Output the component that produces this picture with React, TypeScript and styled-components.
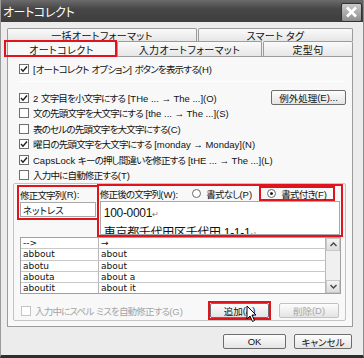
import React from "react"
import styled, { createGlobalStyle, css } from "styled-components"

const GlobalStyle = createGlobalStyle`
  html, body {
    margin: 0;
    padding: 0;
    background: #e9e9e9;
  }
  * { box-sizing: border-box; }
`

const font = `"Noto Sans CJK JP", "Noto Sans", sans-serif`
const red = "#e0141c"

const Window = styled.div`
  position: relative;
  width: 364px;
  height: 358px;
  display: flex;
  flex-direction: column;
  background: #ececec;
  border-left: 1px solid #9a9a9a;
  border-right: 1px solid #8c8c8c;
  border-bottom: 3px solid #2e2e2e;
  font-family: ${font};
  font-size: 9.5px;
  font-feature-settings: "palt" 1;
  letter-spacing: -0.8px;
  color: #111;
  overflow: hidden;
`

const Latin = styled.span`
  font-family: "Liberation Sans", ${font};
  letter-spacing: 0;
  font-size: 9.5px;
`

const TitleBar = styled.div`
  height: 22px;
  flex: none;
  display: flex;
  align-items: center;
  justify-content: space-between;
  padding: 0 1px 0 2px;
  background: linear-gradient(#6b6b6b, #474747 40%, #3e3e3e);
  color: #fff;
  font-size: 12px;
  letter-spacing: -0.4px;
`

const CloseBox = styled.div`
  width: 21px;
  height: 19px;
  margin-top: 2px;
  display: flex;
  align-items: center;
  justify-content: center;
  border: 1px solid #333;
  border-radius: 2px;
  background: linear-gradient(#c9c9c9, #8e8e8e);
`

const Body = styled.div`
  flex: 1;
  display: flex;
  flex-direction: column;
  padding: 6px 10px 0 6px;
`

const TabRow = styled.div<{ $front?: boolean }>`
  display: flex;
  height: ${p => (p.$front ? 15 : 13)}px;
  gap: 1px;
`

const Tab = styled.div<{ $w: number; $active?: boolean }>`
  position: relative;
  width: ${p => p.$w}px;
  display: flex;
  align-items: center;
  justify-content: center;
  font-size: 10px;
  letter-spacing: 0.4px;
  background: ${p => (p.$active ? "#f8f8f8" : "linear-gradient(#fafafa, #e6e6e6)")};
  border: 1px solid #9c9c9c;
  border-bottom: none;
  border-radius: 2px 2px 0 0;
  ${p =>
    p.$active &&
    css`
      &::after {
        content: "";
        position: absolute;
        left: -4px;
        right: -2px;
        top: -2px;
        bottom: -1px;
        border: 2px solid ${red};
      }
    `}
`

const Panel = styled.div`
  height: 271px;
  width: 346px;
  display: flex;
  flex-direction: column;
  background: #f8f8f8;
  border: 1px solid #9c9c9c;
  padding: 6px 6px 0 11px;
`

const CheckRow = styled.label<{ $h?: number; $disabled?: boolean }>`
  height: ${p => p.$h ?? 15.5}px;
  display: flex;
  align-items: center;
  gap: 4px;
  white-space: nowrap;
  color: ${p => (p.$disabled ? "#a4a4a4" : "#111")};
`

const Box = styled.span<{ $disabled?: boolean }>`
  width: 10px;
  height: 10px;
  flex: none;
  display: flex;
  align-items: center;
  justify-content: center;
  background: #fff;
  border: 1px solid ${p => (p.$disabled ? "#c4c4c4" : "#6f6f6f")};
`

const Separator = styled.div`
  height: 1px;
  margin: 6px 1px 8px 0;
  background: #bdbdbd;
  border-bottom: 1px solid #fff;
`

const SpreadRow = styled.div`
  display: flex;
  align-items: center;
  justify-content: space-between;
`

const Button = styled.div<{ $w: number; $disabled?: boolean; $marked?: boolean }>`
  position: relative;
  width: ${p => p.$w}px;
  height: 15px;
  display: flex;
  align-items: center;
  justify-content: center;
  border: 1px solid ${p => (p.$disabled ? "#c2c2c2" : "#6d6d6d")};
  border-radius: 2px;
  background: linear-gradient(#fdfdfd, #e4e4e4);
  color: ${p => (p.$disabled ? "#a8a8a8" : "#111")};
  letter-spacing: 0;
  ${p =>
    p.$marked &&
    css`
      &::after {
        content: "";
        position: absolute;
        inset: -3px -3px -3px -3px;
        border: 2px solid ${red};
      }
    `}
`

const Group = styled.div`
  position: relative;
  margin: 0 0 0 -6px;
  width: 333px;
  height: 138px;
  border: 1px solid #c4c4c4;
  border-radius: 2px;
  padding: 0 2px 0 3px;
  display: flex;
  flex-direction: column;
`

const EntryArea = styled.div`
  display: flex;
  height: 53px;
  align-items: flex-start;
`

const Marked = styled.div<{ $w: number; $h: number; $top?: number; $left?: number }>`
  width: ${p => p.$w}px;
  height: ${p => p.$h}px;
  margin-top: ${p => p.$top ?? 0}px;
  margin-left: ${p => p.$left ?? 0}px;
  border: 2px solid ${red};
  display: flex;
  flex-direction: column;
  padding: 0 1px;
`

const FieldLabel = styled.div`
  height: 15px;
  display: flex;
  align-items: center;
  white-space: nowrap;
`

const RadioOpt = styled.span<{ $marked?: boolean }>`
  height: 15px;
  display: flex;
  align-items: center;
  gap: 5px;
  ${p =>
    p.$marked
      ? css`
          border: 2px solid ${red};
          padding: 0 6px;
          margin: 0 5px 0 auto;
        `
      : css`
          margin-left: 14px;
        `}
`

const Radio = styled.span<{ $on?: boolean }>`
  width: 9px;
  height: 9px;
  border-radius: 50%;
  border: 1px solid #6a6a6a;
  background: #fff;
  display: flex;
  align-items: center;
  justify-content: center;
  &::after {
    content: "";
    width: 3px;
    height: 3px;
    border-radius: 50%;
    background: ${p => (p.$on ? "#222" : "transparent")};
  }
`

const Input = styled.div`
  height: 15px;
  background: #fff;
  border: 1px solid #a8a8a8;
  padding-left: 2px;
  display: flex;
  align-items: center;
  letter-spacing: 0;
`

const TextArea = styled.div`
  flex: 1;
  background: #fff;
  border: 1px solid #a8a8a8;
  padding: 2px 0 0 3px;
  font-size: 12px;
  line-height: 18px;
  letter-spacing: -0.3px;
  overflow: hidden;
  white-space: nowrap;
  font-family: "Liberation Sans", "Noto Sans CJK JP", sans-serif;
`

const Ret = styled.span`
  font-size: 8px;
  color: #777;
`

const ListWrap = styled.div`
  margin-left: 3px;
  width: 321px;
  height: 57px;
  display: flex;
  background: #fff;
  border: 1px solid #a0a0a0;
`

const Table = styled.div`
  flex: 1;
  display: grid;
  grid-template-columns: 78px 1fr;
  grid-auto-rows: 11.3px;
  overflow: hidden;
`

const Cell = styled.div`
  border-right: 1px solid #b8b8b8;
  border-bottom: 1px solid #c8c8c8;
  padding-left: 2px;
  font-family: "DejaVu Sans", "Noto Sans CJK JP", sans-serif;
  font-size: 9px;
  line-height: 10px;
  letter-spacing: 0;
  white-space: nowrap;
`

const ScrollBar = styled.div`
  width: 14px;
  display: flex;
  flex-direction: column;
  justify-content: space-between;
  background: #f0f0f0;
`

const ScrollBtn = styled.div`
  height: 13px;
  display: flex;
  align-items: center;
  justify-content: center;
  background: linear-gradient(#f4f4f4, #dcdcdc);
  border: 1px solid #c8c8c8;
`

const BottomRow = styled.div`
  display: flex;
  align-items: center;
  gap: 10px;
  margin-top: 9px;
  padding: 0 4px 0 4px;
`

const Spacer = styled.div`
  flex: 1;
`

const Footer = styled.div`
  display: flex;
  justify-content: flex-end;
  gap: 8px;
  margin-top: 7px;
  padding-right: 1px;
`

const Cursor = styled.svg`
  position: absolute;
  left: 245px;
  top: 305px;
`

// ASCII runs get a Latin face without the tight kana spacing
const Txt = ({ s }: { s: string }) => (
  <>
    {s.split(/([ -~→]+)/).map((part, i) =>
      /[ -~→]/.test(part) ? <Latin key={i}>{part}</Latin> : <React.Fragment key={i}>{part}</React.Fragment>
    )}
  </>
)

const Check = () => (
  <svg width="8" height="8" viewBox="0 0 8 8">
    <path d="M1 4 L3 6.2 L7 1.5" fill="none" stroke="#1e1e1e" strokeWidth="1.4" />
  </svg>
)

const CheckItem = ({ on, text, h, disabled }: { on?: boolean; text: string; h?: number; disabled?: boolean }) => (
  <CheckRow $h={h} $disabled={disabled}>
    <Box $disabled={disabled}>{on && <Check />}</Box>
    <span>
      <Txt s={text} />
    </span>
  </CheckRow>
)

const Arrow = ({ up }: { up?: boolean }) => (
  <svg width="7" height="5" viewBox="0 0 7 5">
    <path d={up ? "M0.5 4 L3.5 1 L6.5 4" : "M0.5 1 L3.5 4 L6.5 1"} fill="none" stroke="#444" strokeWidth="1.4" />
  </svg>
)

const entries = [
  ["-->", "→"],
  ["abbout", "about"],
  ["abotu", "about"],
  ["abouta", "about a"],
  ["aboutit", "about it"],
]

export default function App() {
  return (
    <>
      <GlobalStyle />
      <Window>
        <TitleBar>
          <span>オートコレクト</span>
          <CloseBox>
            <svg width="13" height="12" viewBox="0 0 13 12">
              <path d="M2 1.5 L11 10.5 M11 1.5 L2 10.5" stroke="#fff" strokeWidth="2.6" />
            </svg>
          </CloseBox>
        </TitleBar>
        <Body>
          <TabRow>
            <Tab $w={190}>一括オートフォーマット</Tab>
            <Tab $w={155}>スマート タグ</Tab>
          </TabRow>
          <TabRow $front>
            <Tab $w={109} $active>オートコレクト</Tab>
            <Tab $w={145}>入力オートフォーマット</Tab>
            <Tab $w={90}>定型句</Tab>
          </TabRow>
          <Panel>
            <CheckItem on h={12} text="[オートコレクト オプション] ボタンを表示する(H)" />
            <Separator />
            <SpreadRow>
              <CheckItem on text="2 文字目を小文字にする [THe ... → The ...](O)" />
              <Button $w={75}>
                <Txt s="例外処理(E)..." />
              </Button>
            </SpreadRow>
            <CheckItem text="文の先頭文字を大文字にする [the ... → The ...](S)" />
            <CheckItem text="表のセルの先頭文字を大文字にする(C)" />
            <CheckItem on text="曜日の先頭文字を大文字にする [monday →  Monday](N)" />
            <CheckItem on text="CapsLock キーの押し間違いを修正する [tHE ... → The ...](L)" />
            <CheckItem text="入力中に自動修正する(T)" />
            <Group>
              <EntryArea>
                <Marked $w={82} $h={35} $top={1}>
                  <FieldLabel>
                    <Txt s="修正文字列(R):" />
                  </FieldLabel>
                  <Input>ネットレス</Input>
                </Marked>
                <Marked $w={247} $h={53} $left={-2}>
                  <FieldLabel>
                    <span>
                      <Txt s="修正後の文字列(W):" />
                    </span>
                    <RadioOpt>
                      <Radio />
                      <span>
                        <Txt s="書式なし(P)" />
                      </span>
                    </RadioOpt>
                    <RadioOpt $marked>
                      <Radio $on />
                      <span>
                        <Txt s="書式付き(F)" />
                      </span>
                    </RadioOpt>
                  </FieldLabel>
                  <TextArea>
                    100-0001<Ret>↵</Ret>
                    <br />
                    東京都千代田区千代田 1-1-1<Ret>↵</Ret>
                  </TextArea>
                </Marked>
              </EntryArea>
              <ListWrap>
                <Table>
                  {entries.map(([from, to]) => (
                    <React.Fragment key={from}>
                      <Cell>{from}</Cell>
                      <Cell>{to}</Cell>
                    </React.Fragment>
                  ))}
                </Table>
                <ScrollBar>
                  <ScrollBtn>
                    <Arrow up />
                  </ScrollBtn>
                  <ScrollBtn>
                    <Arrow />
                  </ScrollBtn>
                </ScrollBar>
              </ListWrap>
              <BottomRow>
                <CheckItem disabled text="入力中にスペル ミスを自動修正する(G)" />
                <Spacer />
                <Button $w={59} $marked>
                  <Txt s="追加(A)" />
                </Button>
                <Button $w={60} $disabled>
                  <Txt s="削除(D)" />
                </Button>
              </BottomRow>
            </Group>
          </Panel>
          <Footer>
            <Button $w={63}>
              <Latin>OK</Latin>
            </Button>
            <Button $w={58}>キャンセル</Button>
          </Footer>
        </Body>
        <Cursor width="12" height="18" viewBox="0 0 12 18">
          <path d="M1 1 L1 14 L4 11 L6.5 16.5 L8.5 15.5 L6 10 L10 10 Z" fill="#fff" stroke="#000" strokeWidth="1" />
        </Cursor>
      </Window>
    </>
  )
}
